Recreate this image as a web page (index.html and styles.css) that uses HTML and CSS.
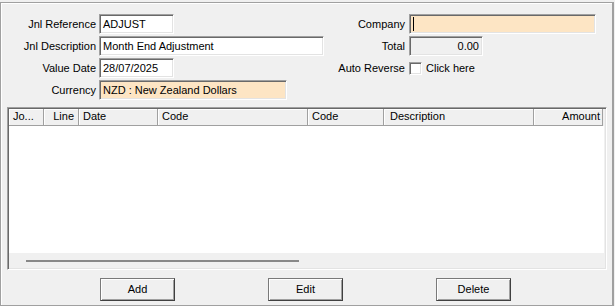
FILE: index.html
```html
<!DOCTYPE html>
<html lang="en">
<head>
    <meta charset="UTF-8">
    <title>Journal Entry</title>
    <link rel="stylesheet" href="styles.css">
</head>
<body>
    <div class="window">
        <!-- Cabecera del diario -->
        <div class="top">
            <div class="form form-left">
                <label>Jnl Reference</label>
                <div class="field w-short">ADJUST</div>
                <label>Jnl Description</label>
                <div class="field w-desc">Month End Adjustment</div>
                <label>Value Date</label>
                <div class="field w-short">28/07/2025</div>
                <label>Currency</label>
                <div class="field lookup w-currency">NZD : New Zealand Dollars</div>
            </div>
            <div class="form form-right">
                <label>Company</label>
                <div class="field lookup w-company"><span class="caret"></span></div>
                <label>Total</label>
                <div class="field readonly w-total">0.00</div>
                <label>Auto Reverse</label>
                <div class="check"><span class="box"></span>Click here</div>
            </div>
        </div>

        <!-- Lineas del diario -->
        <div class="grid">
            <div class="grid-head">
                <div class="col c-jo">Jo...</div>
                <div class="col c-line right">Line</div>
                <div class="col c-date">Date</div>
                <div class="col c-code">Code</div>
                <div class="col c-code2">Code</div>
                <div class="col c-desc">Description</div>
                <div class="col c-amount right">Amount</div>
            </div>
            <div class="grid-body"></div>
            <div class="hscroll"><div class="thumb"></div></div>
        </div>

        <div class="buttons">
            <button>Add</button>
            <button>Edit</button>
            <button>Delete</button>
        </div>
    </div>
</body>
</html>
```

FILE: styles.css
```css
/* Reset */
* {
    box-sizing: border-box;
    margin: 0;
    padding: 0;
}

body {
    font-family: 'Liberation Sans', Arial, sans-serif;
    font-size: 11px;
    color: #000;
    background-color: #f0f0f0;
}

.window {
    margin-top: 2px;
    width: 614px;
    height: 304px;
    border: 1px solid #a0a0a0;
    border-right-width: 2px;
    box-shadow: inset 1px 1px #fff;
    background-color: #f0f0f0;
    display: flex;
    flex-direction: column;
}

/* Form */
.top {
    display: flex;
    height: 104px;
    padding-top: 11px;
}

.form {
    display: grid;
    grid-auto-rows: 20px;
    row-gap: 2px;
    align-content: start;
}

.form-left {
    width: 330px;
    grid-template-columns: 95px auto;
    column-gap: 3px;
}

.form-right {
    grid-template-columns: 74px auto;
    column-gap: 4px;
}

.form label {
    justify-self: end;
    align-self: center;
    line-height: 14px;
    margin-top: -1px;
}

.field {
    height: 20px;
    line-height: 18px;
    padding: 0 3px;
    background-color: #fff;
    border-top: 1px solid #a0a0a0;
    border-left: 1px solid #a0a0a0;
    border-right: 1px solid #fff;
    border-bottom: 1px solid #fff;
    box-shadow: inset 1px 1px #696969, inset -1px -1px #e3e3e3;
    white-space: nowrap;
    overflow: hidden;
}

.lookup {
    background-color: #fde5c4;
}

.readonly {
    background-color: #f0f0f0;
    text-align: right;
}

.w-short { width: 75px; }
.w-desc { width: 225px; }
.w-currency { width: 188px; }
.w-company { width: 187px; }
.w-total { width: 74px; }

.caret {
    display: inline-block;
    width: 1px;
    height: 14px;
    margin-top: 2px;
    background-color: #000;
    vertical-align: top;
}

.check {
    display: flex;
    align-items: center;
    gap: 4px;
}

.check .box {
    width: 13px;
    height: 13px;
    background-color: #fff;
    border-top: 1px solid #a0a0a0;
    border-left: 1px solid #a0a0a0;
    border-right: 1px solid #fff;
    border-bottom: 1px solid #fff;
    box-shadow: inset 1px 1px #696969, inset -1px -1px #e3e3e3;
}

/* Grid */
.grid {
    margin-left: 6px;
    width: 600px;
    height: 163px;
    border-top: 1px solid #a0a0a0;
    border-left: 1px solid #a0a0a0;
    border-right: 1px solid #fff;
    border-bottom: 1px solid #fff;
    box-shadow: inset 1px 1px #696969, inset -1px -1px #e3e3e3;
    padding: 1px;
    display: flex;
    flex-direction: column;
}

.grid-head {
    display: flex;
    height: 17px;
    flex-shrink: 0;
}

.col {
    height: 17px;
    line-height: 15px;
    padding: 0 4px;
    background-color: #f0f0f0;
    border-right: 1px solid #a0a0a0;
    border-bottom: 1px solid #a0a0a0;
    box-shadow: inset 1px 1px #fff;
    white-space: nowrap;
}

.col.right {
    text-align: right;
}

.c-jo { width: 35px; }
.c-line { width: 35px; }
.c-date { width: 79px; }
.c-code { width: 150px; }
.c-code2 { width: 76px; }
.c-desc { width: 150px; padding-left: 6px; }
.c-amount { width: 69px; padding-right: 2px; }

.grid-body {
    flex: 1;
    background-color: #fff;
    margin-right: 1px;
}

.hscroll {
    height: 15px;
    flex-shrink: 0;
    padding-top: 7px;
}

.hscroll .thumb {
    margin-left: 17px;
    width: 273px;
    height: 2px;
    background-color: #888;
}

/* Buttons */
.buttons {
    display: flex;
    gap: 93px;
    padding-left: 99px;
    margin-top: 8px;
}

.buttons button {
    width: 75px;
    height: 23px;
    line-height: 19px;
    padding-bottom: 1px;
    font-family: inherit;
    font-size: 11px;
    color: #000;
    background-color: #f0f0f0;
    border: 1px solid #7a7a7a;
    border-right-color: #404040;
    border-bottom-color: #404040;
    box-shadow: inset 1px 1px #fff, inset -1px -1px #a0a0a0;
}
```
